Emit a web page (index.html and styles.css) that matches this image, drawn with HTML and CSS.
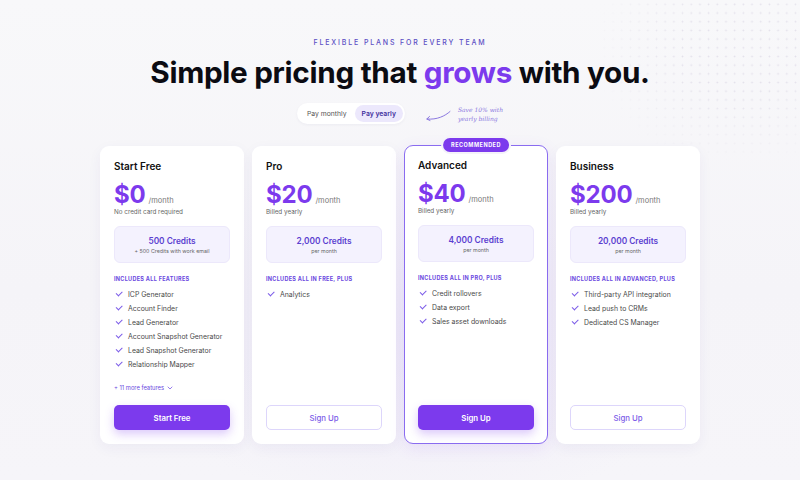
FILE: index.html
```html
<!DOCTYPE html>
<html lang="en">
<head>
  <meta charset="UTF-8" />
  <meta name="viewport" content="width=device-width, initial-scale=1.0"/>
  <title>Pricing</title>
  <link rel="stylesheet" href="styles.css">
</head>
<body>
  <div class="dots"></div>

  <header class="hero">
    <p class="eyebrow">Flexible plans for every team</p>
    <h1>Simple pricing that <span class="accent">grows</span> with you.</h1>

    <div class="billing">
      <div class="toggle">
        <button class="toggle-btn">Pay monthly</button>
        <button class="toggle-btn active">Pay yearly</button>
      </div>
      <div class="note">
        <svg class="note-arrow" width="26" height="12" viewBox="0 0 26 12">
          <path d="M25 1.5 C20 6, 12 10, 2 9" fill="none" stroke="#8b78e0" stroke-width="1" stroke-linecap="round"/>
          <path d="M4.5 6.5 L1.8 9 L5 10.5" fill="none" stroke="#8b78e0" stroke-width="1" stroke-linecap="round" stroke-linejoin="round"/>
        </svg>
        <span class="note-text">Save 10% with<br>yearly billing</span>
      </div>
    </div>
  </header>

  <main class="plans">
    <div class="card">
      <h3 class="plan-name">Start Free</h3>
      <div class="price"><span class="amount">$0</span><span class="per">/month</span></div>
      <p class="billed">No credit card required</p>
      <div class="credits">
        <strong>500 Credits</strong>
        <span>+ 500 Credits with work email</span>
      </div>
      <p class="includes">Includes all features</p>
      <ul class="features">
        <li>ICP Generator</li>
        <li>Account Finder</li>
        <li>Lead Generator</li>
        <li>Account Snapshot Generator</li>
        <li>Lead Snapshot Generator</li>
        <li>Relationship Mapper</li>
      </ul>
      <a class="more">+ 11 more features
        <svg width="6" height="4" viewBox="0 0 6 4"><path d="M1 1 L3 3 L5 1" fill="none" stroke="#7c5ce8" stroke-width="0.8" stroke-linecap="round"/></svg>
      </a>
      <button class="btn btn-solid">Start Free</button>
    </div>

    <div class="card">
      <h3 class="plan-name">Pro</h3>
      <div class="price"><span class="amount">$20</span><span class="per">/month</span></div>
      <p class="billed">Billed yearly</p>
      <div class="credits">
        <strong>2,000 Credits</strong>
        <span>per month</span>
      </div>
      <p class="includes">Includes all in Free, plus</p>
      <ul class="features">
        <li>Analytics</li>
      </ul>
      <button class="btn btn-outline">Sign Up</button>
    </div>

    <div class="card featured">
      <span class="badge">Recommended</span>
      <h3 class="plan-name">Advanced</h3>
      <div class="price"><span class="amount">$40</span><span class="per">/month</span></div>
      <p class="billed">Billed yearly</p>
      <div class="credits">
        <strong>4,000 Credits</strong>
        <span>per month</span>
      </div>
      <p class="includes">Includes all in Pro, plus</p>
      <ul class="features">
        <li>Credit rollovers</li>
        <li>Data export</li>
        <li>Sales asset downloads</li>
      </ul>
      <button class="btn btn-solid">Sign Up</button>
    </div>

    <div class="card">
      <h3 class="plan-name">Business</h3>
      <div class="price"><span class="amount">$200</span><span class="per">/month</span></div>
      <p class="billed">Billed yearly</p>
      <div class="credits">
        <strong>20,000 Credits</strong>
        <span>per month</span>
      </div>
      <p class="includes">Includes all in Advanced, plus</p>
      <ul class="features">
        <li>Third-party API integration</li>
        <li>Lead push to CRMs</li>
        <li>Dedicated CS Manager</li>
      </ul>
      <button class="btn btn-outline">Sign Up</button>
    </div>
  </main>
</body>
</html>
```

FILE: styles.css
```css
* {
  box-sizing: border-box;
}
body {
  margin: 0;
  height: 480px;
  overflow: hidden;
  font-family: Inter, "Noto Sans", sans-serif;
  color: #111;
  background:
    radial-gradient(ellipse 420px 260px at 420px 330px, rgba(232, 226, 248, 0.55), transparent 70%),
    linear-gradient(180deg, #f8f8fa 0%, #f5f4f8 60%, #f6f5f9 100%);
  position: relative;
}

/* dotted texture in the top right corner */
.dots {
  position: absolute;
  top: 0;
  right: 0;
  width: 200px;
  height: 160px;
  background-image: radial-gradient(circle, #e2dfea 0.7px, transparent 1.1px);
  background-size: 8.7px 8.7px;
  -webkit-mask-image: radial-gradient(ellipse at 70% 30%, #000 30%, transparent 75%);
  mask-image: radial-gradient(ellipse at 70% 30%, #000 30%, transparent 75%);
  pointer-events: none;
}

.hero {
  position: relative;
  text-align: center;
  padding-top: 38px;
}
.eyebrow {
  margin: 0;
  font-size: 7px;
  font-weight: 500;
  letter-spacing: 1.85px;
  text-transform: uppercase;
  color: #5b4fc4;
  line-height: 9px;
}
h1 {
  margin: 7px 0 0;
  font-size: 29.7px;
  line-height: 36px;
  font-weight: 700;
  letter-spacing: -0.3px;
  color: #0b0b12;
}
.accent {
  color: #7c3aed;
}

.billing {
  display: flex;
  justify-content: center;
  align-items: center;
  gap: 20px;
  margin-top: 13px;
  height: 21px;
}
.toggle {
  display: flex;
  align-items: center;
  background: #fff;
  border-radius: 11px;
  padding: 2px;
  box-shadow: 0 1px 3px rgba(40, 30, 90, 0.05);
}
.toggle-btn {
  border: 0;
  background: none;
  font-family: inherit;
  font-size: 6.8px;
  color: #555;
  padding: 0 8px;
  height: 17px;
  border-radius: 9px;
}
.toggle-btn.active {
  background: #ece8fc;
  color: #3f2f9e;
  font-weight: 600;
  padding: 0 7px;
}
.note {
  display: flex;
  align-items: center;
  gap: 7px;
}
.note-arrow {
  margin-top: 5px;
}
.note-text {
  text-align: left;
  font-family: "DejaVu Serif", serif;
  font-style: italic;
  font-size: 6px;
  line-height: 9px;
  color: #8b78e0;
}

.plans {
  display: grid;
  grid-template-columns: repeat(4, 144px);
  gap: 8px;
  justify-content: center;
  margin-top: 22px;
}
.card {
  position: relative;
  display: flex;
  flex-direction: column;
  height: 298px;
  background: #fff;
  border-radius: 9px;
  padding: 14px 14px 14px;
  box-shadow: 0 4px 14px rgba(60, 40, 140, 0.05);
}
.card.featured {
  border: 1px solid #8a6cf0;
  margin-top: -1px;
  padding: 13px 13px 13px;
  height: 299px;
  box-shadow: 0 4px 16px rgba(124, 58, 237, 0.1);
}
.badge {
  position: absolute;
  top: -8px;
  left: 50%;
  transform: translateX(-50%);
  background: #7c3aed;
  color: #fff;
  font-size: 5.5px;
  font-weight: 700;
  letter-spacing: 0.5px;
  text-transform: uppercase;
  padding: 0 8px;
  height: 14px;
  line-height: 14px;
  border-radius: 7px;
  white-space: nowrap;
  box-shadow: 0 0 0 2px #f4f2fa;
}
.plan-name {
  margin: 0;
  font-size: 10px;
  line-height: 13px;
  font-weight: 600;
  color: #111;
}
.price {
  display: flex;
  align-items: baseline;
  gap: 3px;
  margin-top: 9px;
  height: 26px;
}
.amount {
  font-size: 24px;
  line-height: 26px;
  font-weight: 700;
  color: #7c3aed;
  letter-spacing: -0.2px;
}
.per {
  font-size: 7.5px;
  color: #777;
}
.billed {
  margin: 0;
  font-size: 6.3px;
  line-height: 8px;
  color: #666;
}
.credits {
  display: flex;
  flex-direction: column;
  align-items: center;
  justify-content: center;
  gap: 2px;
  margin-top: 10px;
  height: 37px;
  background: #f4f2fe;
  border: 1px solid #ece8fb;
  border-radius: 6px;
}
.credits strong {
  font-size: 8.3px;
  font-weight: 600;
  color: #5b3fd0;
}
.credits span {
  font-size: 5.3px;
  color: #666;
}
.includes {
  margin: 12px 0 0;
  font-size: 5.5px;
  line-height: 8px;
  font-weight: 700;
  letter-spacing: 0.3px;
  text-transform: uppercase;
  color: #6a48e0;
}
.features {
  list-style: none;
  margin: 4px 0 0;
  padding: 0;
}
.features li {
  display: flex;
  align-items: center;
  height: 14px;
  font-size: 6.9px;
  color: #4a4a4a;
}
.features li::before {
  content: "";
  width: 5px;
  height: 2.5px;
  margin: -2px 6px 0 2px;
  border-left: 1px solid #7c5ce8;
  border-bottom: 1px solid #7c5ce8;
  transform: rotate(-45deg);
}
.more {
  display: flex;
  align-items: center;
  gap: 3px;
  margin-top: 13px;
  font-size: 5.8px;
  line-height: 8px;
  color: #6a48e0;
}
.btn {
  margin-top: auto;
  height: 25px;
  border-radius: 5px;
  font-family: inherit;
  font-size: 7.8px;
  font-weight: 600;
}
.btn-solid {
  border: 0;
  background: #7c3aed;
  color: #fff;
  box-shadow: 0 4px 10px rgba(124, 58, 237, 0.28);
}
.btn-outline {
  border: 1px solid #ddd6fb;
  background: #fff;
  color: #7c5ce8;
  font-weight: 500;
}
```
